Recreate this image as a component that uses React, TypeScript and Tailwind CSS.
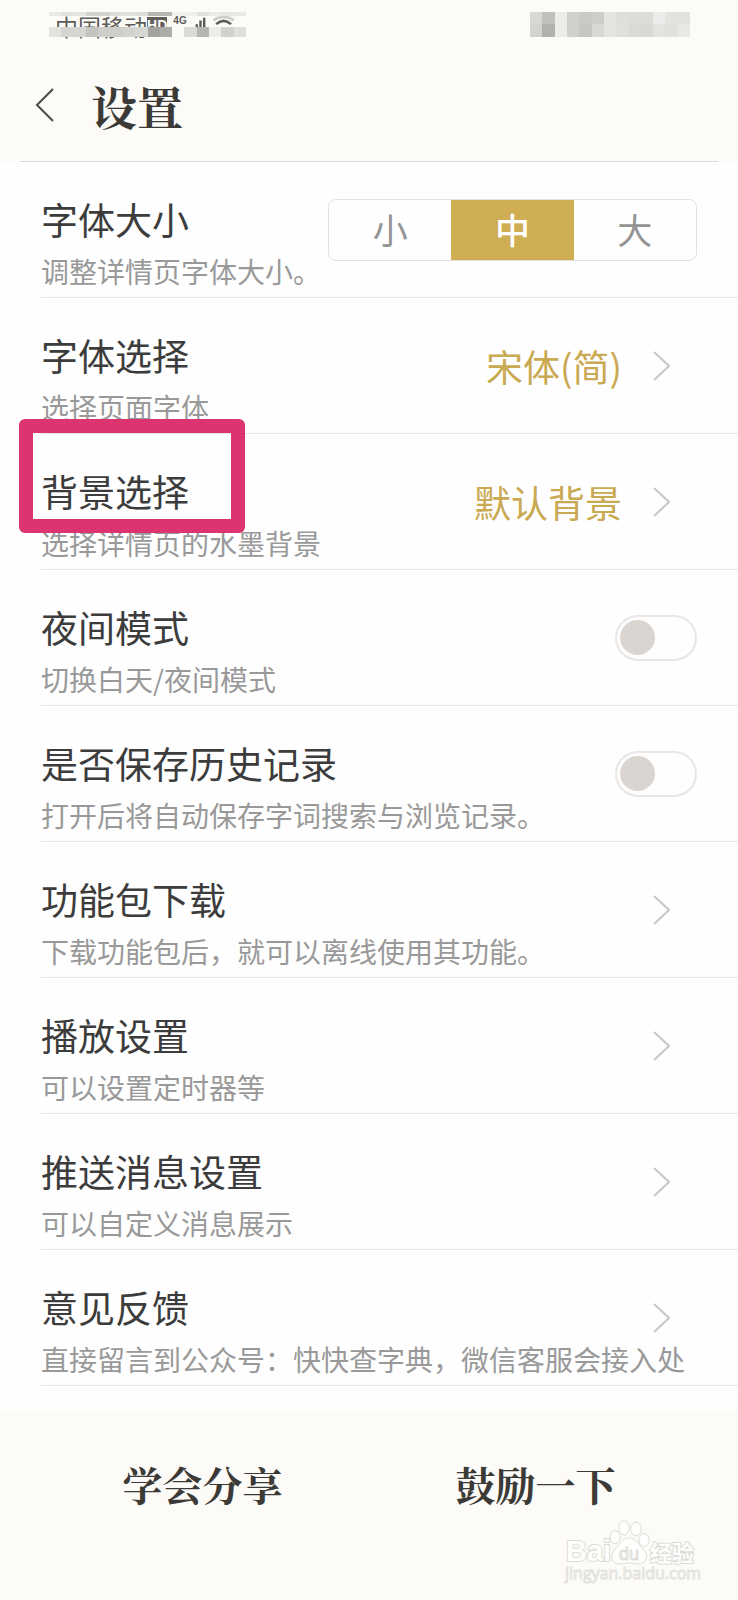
import React from 'react';

type Row = {
  title: string;
  desc: string;
  value?: string;
  kind: 'size' | 'link' | 'switch';
  highlighted?: boolean;
};

const rows: Row[] = [
  { title: '字体大小', desc: '调整详情页字体大小。', kind: 'size' },
  { title: '字体选择', desc: '选择页面字体', value: '宋体(简)', kind: 'link' },
  { title: '背景选择', desc: '选择详情页的水墨背景', value: '默认背景', kind: 'link', highlighted: true },
  { title: '夜间模式', desc: '切换白天/夜间模式', kind: 'switch' },
  { title: '是否保存历史记录', desc: '打开后将自动保存字词搜索与浏览记录。', kind: 'switch' },
  { title: '功能包下载', desc: '下载功能包后，就可以离线使用其功能。', kind: 'link' },
  { title: '播放设置', desc: '可以设置定时器等', kind: 'link' },
  { title: '推送消息设置', desc: '可以自定义消息展示', kind: 'link' },
  { title: '意见反馈', desc: '直接留言到公众号：快快查字典，微信客服会接入处', kind: 'link' },
];

const carrierTop = ['#e9e9e5', '#e0e0dc', '#e4e4e0', '#d2d2ce', '#d2d2ce', '#dededa', '#e0e0dc', '#dcdcd8', '#b4b4b0', '#b4b4b0', '#f2f2ee', '#efefeb', '#e2e2de', '#ebebe7', '#e6e6e2', '#e9e9e5'];
const carrierBottom = ['#e2e2de', '#d5d5d1', '#d5d5d1', '#c3c3bf', '#cdcdc9', '#cdcdc9', '#d2d2ce', '#d6d6d2', '#a3a39f', '#ababa7', '#fbfaf6', '#d9d9d5', '#b5b5b1', '#ecece8', '#d1d1cd', '#dfdfdb'];
const statusTop = ['#d8d8d5', '#c0c0bd', '#ececea', '#d0d0cd', '#cacac7', '#cdcdca', '#e4e4e1', '#dededb', '#dcdcd9', '#dcdcd9', '#ececea', '#e2e2df', '#e2e2df'];
const statusBottom = ['#d3d3d0', '#b1b1ae', '#ececea', '#d0d0cd', '#c5c5c2', '#d8d8d5', '#e4e4e1', '#dfdfdc', '#d9d9d6', '#d8d8d5', '#e3e3e0', '#e0e0dd', '#e8e8e5'];

function Blocks({ colors, className }: { colors: string[]; className: string }) {
  return (
    <div className={`relative z-10 flex ${className}`}>
      {colors.map((color, i) => (
        <span key={i} className="flex-1" style={{ backgroundColor: color }} />
      ))}
    </div>
  );
}

function StatusBar() {
  return (
    <div className="flex justify-between pl-[49px] pr-12 pt-3">
      <div className="w-[197px]">
        <Blocks colors={carrierTop} className="h-1" />
        <div className="flex h-[11px] items-start pl-1.5 text-[#5d5c58]">
          <span className="-mt-1 w-[93px] whitespace-nowrap text-[23px] leading-7">中国移动</span>
          <span className="mt-px h-5 w-[22px] bg-[#5f5e5a] text-center font-['Liberation_Sans'] text-sm font-bold leading-4 text-[#fbfaf6]">
            HD
          </span>
          <span className="ml-1.5 mt-px w-4 font-['Liberation_Sans'] text-[10px] font-bold leading-2">4G</span>
          <svg className="ml-1.5 h-5 w-14" viewBox="0 0 56 20" fill="none" stroke="currentColor">
            <path d="M3 8v10M7 4v14M11 1v17" strokeWidth="2.6" />
            <path d="M21 4q11-8 22 0" stroke="#cfcfcb" strokeWidth="3" />
            <path d="M24 8q8-7 16 0" strokeWidth="2.8" />
          </svg>
        </div>
        <Blocks colors={carrierBottom} className="h-2.5" />
      </div>
      <div className="w-40">
        <Blocks colors={statusTop} className="h-3" />
        <Blocks colors={statusBottom} className="h-[13px]" />
      </div>
    </div>
  );
}

function Chevron() {
  return (
    <svg className="h-8 w-5" viewBox="0 0 20 32" fill="none" stroke="#c6c6c6" strokeWidth="2">
      <path d="M2 2l15 14-15 14" />
    </svg>
  );
}

function SizePicker() {
  const [size, setSize] = React.useState('中');

  return (
    <div className="flex h-[62px] w-[369px] overflow-hidden rounded-lg border border-[#e2e2e2]" role="group" aria-label="字体大小">
      {['小', '中', '大'].map((s) => (
        <button
          key={s}
          onClick={() => setSize(s)}
          aria-pressed={size === s}
          className={`-my-px flex-1 text-[35px] ${size === s ? 'bg-[#cfae53] font-medium text-white' : 'text-[#949494]'}`}
        >
          {s}
        </button>
      ))}
    </div>
  );
}

function SettingRow({ row, id }: { row: Row; id: string }) {
  const text = (
    <span className="col-start-1 row-start-1 block pb-1.5 pt-[33px]">
      <span className="block text-[37px] leading-12 text-[#3c3c3c]">{row.title}</span>
      <span className="mt-2 block whitespace-nowrap text-[28px] leading-10 text-[#999]">{row.desc}</span>
    </span>
  );
  const side = 'col-start-1 row-start-1 flex items-center self-center justify-self-end';

  return (
    <li className="relative ml-[41px] border-b border-[#e5e5e5]">
      {row.kind === 'link' && (
        <button className="grid w-full pr-[41px] text-left">
          {text}
          <span className={`${side} gap-[30px] pr-[25px]`}>
            {row.value && <span className="text-[37px] leading-12 text-[#c9a951]">{row.value}</span>}
            <Chevron />
          </span>
        </button>
      )}
      {row.kind === 'switch' && (
        <label htmlFor={id} className="grid w-full pr-[41px]">
          {text}
          <span className={side}>
            <input
              id={id}
              type="checkbox"
              role="switch"
              className="flex h-[46px] w-[82px] appearance-none items-center rounded-full border-2 border-[#e9e7e6] px-[3px] before:size-[35px] before:rounded-full before:bg-[#dad5d1] checked:justify-end checked:before:bg-[#cfae53]"
            />
          </span>
        </label>
      )}
      {row.kind === 'size' && (
        <div className="grid w-full pr-[41px]">
          {text}
          <div className={side}>
            <SizePicker />
          </div>
        </div>
      )}
      {row.highlighted && (
        <span className="pointer-events-none absolute -left-[22px] -top-[15px] z-10 h-[114px] w-[226px] rounded-md border-14 border-[#db3471]" />
      )}
    </li>
  );
}

function Watermark() {
  return (
    <svg
      className="pointer-events-none absolute bottom-4 right-9 h-[68px] w-[138px]"
      viewBox="0 0 138 68"
      fill="#fefefd"
      stroke="#dcdbd8"
      strokeWidth="1"
    >
      <g fontFamily="Liberation Sans, Noto Sans CJK SC, sans-serif" fontWeight="bold" paintOrder="stroke" strokeWidth="2">
        <text x="2" y="45" fontSize="29">Bai</text>
        <text x="86" y="45" fontSize="22">经验</text>
      </g>
      <ellipse cx="51" cy="21" rx="5" ry="6.5" />
      <ellipse cx="60" cy="12" rx="5.2" ry="7" />
      <ellipse cx="72" cy="13" rx="5.2" ry="7" />
      <ellipse cx="80" cy="24" rx="5.2" ry="6.5" />
      <path d="M65 22c7 0 10 7 14 11 7 7 3 15-5 15-4 0-6-1-9-1s-5 1-9 1c-9 0-11-8-5-15 4-4 7-11 14-11z" />
      <text x="55" y="44" fontSize="18" fontFamily="Liberation Sans, sans-serif">du</text>
      <text x="1" y="63" fontSize="16" fontFamily="Open Sans, sans-serif" stroke="#e3e2df">jingyan.baidu.com</text>
    </svg>
  );
}

export default function App() {
  return (
    <div className="relative flex min-h-screen flex-col overflow-hidden bg-[#fefefe] font-['Noto_Sans_CJK_SC',sans-serif]">
      <header className="bg-[#fcfbf7]">
        <StatusBar />
        <div className="flex h-[124px] items-center pl-[35px] pt-3">
          <button aria-label="返回">
            <svg className="h-9 w-5" viewBox="0 0 20 36" fill="none" stroke="#4b4a46" strokeWidth="2">
              <path d="M18 2L2 18l16 16" />
            </svg>
          </button>
          <h1 className="ml-9 font-['Noto_Serif_CJK_SC',serif] text-[46px] font-bold leading-14 text-[#3b3a36]">设置</h1>
        </div>
        <div className="mx-5 h-px bg-[#d9dad3]" />
      </header>

      <ul>
        {rows.map((row, i) => (
          <SettingRow key={row.title} row={row} id={`setting-${i}`} />
        ))}
      </ul>

      <footer className="mt-6 grid flex-1 grid-cols-2 items-start bg-[#fcfbf7] px-9 pt-[50px] font-['Noto_Serif_CJK_SC',serif] text-[40px] font-bold leading-12 text-[#3b3a36]">
        <button>学会分享</button>
        <button>鼓励一下</button>
      </footer>
      <Watermark />
    </div>
  );
}
